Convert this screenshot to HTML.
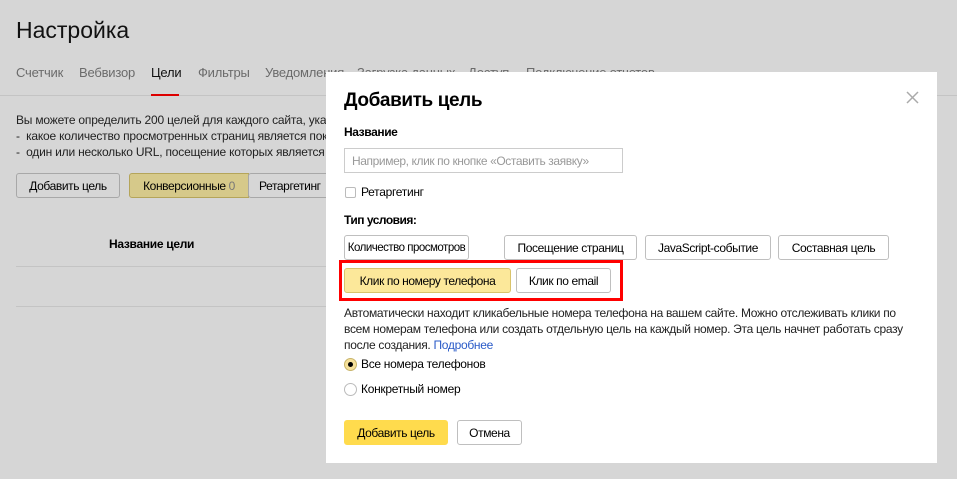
<!DOCTYPE html>
<html><head><meta charset="utf-8"><style>
*{margin:0;padding:0;box-sizing:border-box}
body{width:957px;height:479px;overflow:hidden;background:#d6d6d6;font-family:"Liberation Sans",sans-serif;color:#000;position:relative;font-size:12px}
.a{position:absolute;white-space:nowrap}
.btn{position:absolute;border:1px solid #bfbfbf;border-radius:3px;background:#fff;font-size:12px;display:flex;align-items:center;justify-content:center;letter-spacing:-0.4px;white-space:nowrap}
.t{position:absolute;top:65px;font-size:13px;color:#6b6b6b;letter-spacing:-0.2px;white-space:nowrap}
</style></head><body>
<div class="a" style="left:16px;top:17px;font-size:23px;color:#111">Настройка</div>
<div class="t" style="left:16px">Счетчик</div>
<div class="t" style="left:79px">Вебвизор</div>
<div class="t" style="left:151px;color:#111">Цели</div>
<div class="t" style="left:198px">Фильтры</div>
<div class="t" style="left:265px">Уведомления</div>
<div class="t" style="left:357px">Загрузка данных</div>
<div class="t" style="left:468px">Доступ</div>
<div class="t" style="left:526px">Подключение отчетов</div>
<div class="a" style="left:0;top:95px;width:957px;height:1px;background:#c4c4c4"></div>
<div class="a" style="left:151px;top:94px;width:28px;height:2px;background:#d00"></div>
<div class="a" style="left:16px;top:112px;font-size:12px;line-height:16px;color:#222;letter-spacing:-0.2px">Вы можете определить 200 целей для каждого сайта, указ<br>-&nbsp; какое количество просмотренных страниц является пок<br>-&nbsp; один или несколько URL, посещение которых является ж</div>
<div class="btn" style="left:16px;top:173px;width:104px;height:25px;background:#d6d6d6;border-color:#a8a8a8">Добавить цель</div>
<div class="btn" style="left:129px;top:173px;width:120px;height:25px;background:#d6c98a;border-color:#b5a55a;border-radius:3px 0 0 3px">Конверсионные&nbsp;<span style="color:#777">0</span></div>
<div class="btn" style="left:248px;top:173px;width:90px;height:25px;background:#d6d6d6;border-color:#a8a8a8;justify-content:flex-start;padding-left:10px">Ретаргетинг</div>
<div class="a" style="left:109px;top:237px;font-weight:bold;font-size:12px;letter-spacing:-0.3px">Название цели</div>
<div class="a" style="left:16px;top:266px;width:320px;height:1px;background:#c4c4c4"></div>
<div class="a" style="left:16px;top:306px;width:320px;height:1px;background:#c4c4c4"></div>

<div class="a" style="left:326px;top:72px;width:611px;height:391px;background:#fff"></div>
<div class="a" style="left:344px;top:90px;font-size:19px;font-weight:bold;letter-spacing:-0.4px">Добавить цель</div>
<svg class="a" style="left:906px;top:91px" width="13" height="13"><path d="M1 1L12 12M12 1L1 12" stroke="#aaa" stroke-width="1.5"/></svg>
<div class="a" style="left:344px;top:125px;font-weight:bold;letter-spacing:-0.4px">Название</div>
<div class="a" style="left:344px;top:148px;width:279px;height:25px;border:1px solid #ccc;color:#999;padding:5px 0 0 7px;letter-spacing:-0.4px">Например, клик по кнопке «Оставить заявку»</div>
<div class="a" style="left:345px;top:187px;width:11px;height:11px;border:1px solid #bbb;border-radius:2px"></div>
<div class="a" style="left:361px;top:185px;letter-spacing:-0.3px">Ретаргетинг</div>
<div class="a" style="left:344px;top:213px;font-weight:bold;letter-spacing:-0.5px">Тип условия:</div>
<div class="btn" style="left:344px;top:235px;width:125px;height:25px;letter-spacing:-0.5px;font-size:11.5px">Количество просмотров</div>
<div class="btn" style="left:504px;top:235px;width:133px;height:25px">Посещение страниц</div>
<div class="btn" style="left:645px;top:235px;width:126px;height:25px">JavaScript-событие</div>
<div class="btn" style="left:778px;top:235px;width:111px;height:25px">Составная цель</div>
<div class="btn" style="left:344px;top:268px;width:167px;height:25px;background:#fce89a;border-color:#d9c36a">Клик по номеру телефона</div>
<div class="btn" style="left:516px;top:268px;width:95px;height:25px">Клик по email</div>
<div class="a" style="left:339px;top:260px;width:284px;height:41px;border:3px solid #f00"></div>
<div class="a" style="left:344px;top:305px;line-height:16px;font-size:12px;letter-spacing:-0.3px;color:#222">Автоматически находит кликабельные номера телефона на вашем сайте. Можно отслеживать клики по<br>всем номерам телефона или создать отдельную цель на каждый номер. Эта цель начнет работать сразу<br>после создания. <span style="color:#2a5bc8">Подробнее</span></div>
<div class="a" style="left:344px;top:358px;width:13px;height:13px;border-radius:50%;background:#f5e09a;border:1px solid #c8b46a"><div style="width:5px;height:5px;border-radius:50%;background:#000;margin:3px"></div></div>
<div class="a" style="left:361px;top:357px;letter-spacing:-0.3px">Все номера телефонов</div>
<div class="a" style="left:344px;top:383px;width:13px;height:13px;border-radius:50%;border:1px solid #bbb"></div>
<div class="a" style="left:361px;top:382px;letter-spacing:-0.3px">Конкретный номер</div>
<div class="btn" style="left:344px;top:420px;width:104px;height:25px;background:#ffdb4d;border-color:#ffdb4d">Добавить цель</div>
<div class="btn" style="left:457px;top:420px;width:65px;height:25px">Отмена</div>
</body></html>
